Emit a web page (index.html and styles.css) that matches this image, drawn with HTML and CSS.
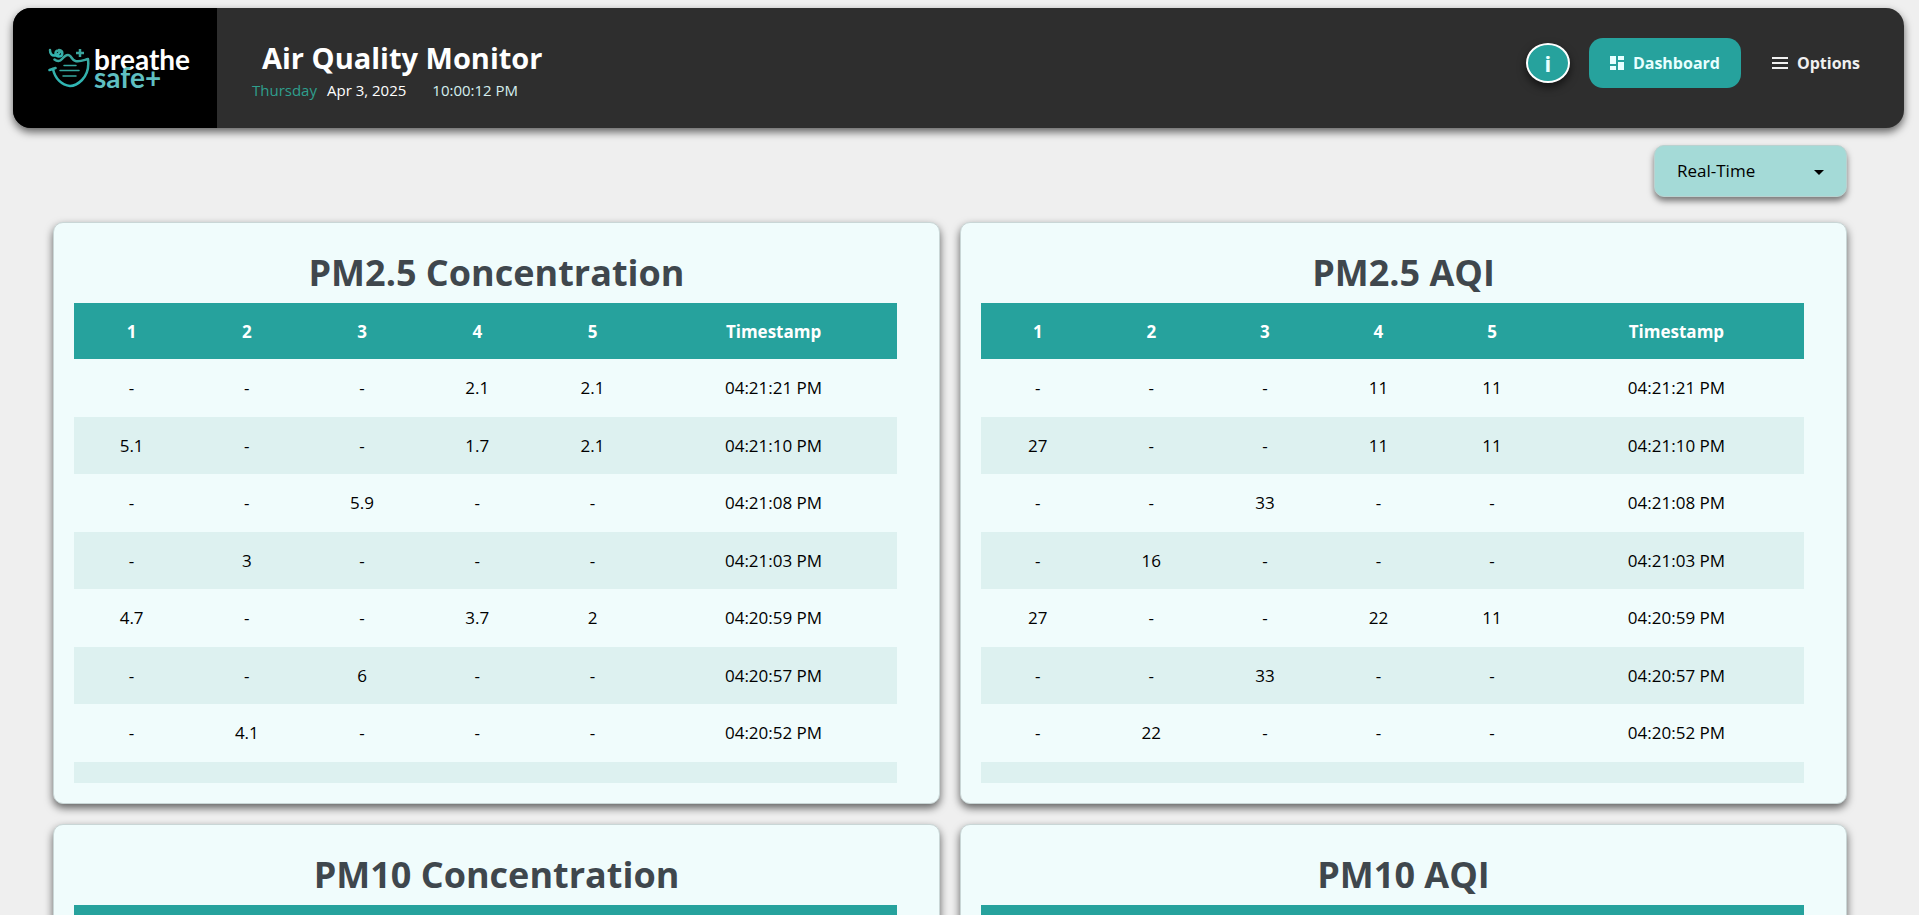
FILE: index.html
```
<!DOCTYPE html>
<html lang="en">
<head>
<meta charset="utf-8">
<title>Air Quality Monitor</title>
<link rel="stylesheet" href="styles.css">
</head>
<body>
<header class="topbar">
  <div class="logo">
    <svg class="logo-mark" viewBox="0 0 42 40" aria-hidden="true">
      <defs><linearGradient id="mask" x1="0" y1="0" x2="0" y2="1"><stop offset="0" stop-color="#3aa59c"/><stop offset="1" stop-color="#2fb7b5"/></linearGradient></defs>
      <g fill="none" stroke="url(#mask)" stroke-width="2.500" stroke-linecap="round" stroke-linejoin="round">
        <path d="M2 2C2 6 4 8 7 7.500C11 7 13 3 10.500 2.500C7 2 6 8.500 10.500 8.500C15.500 8.500 15.500 2.500 11 2"/>
        <path d="M6.500 11.500C9 13.500 12 13.500 14 11C17 7.500 19 6 21.500 7.500C24 9 24 12 27.500 13C32 14 36 12 40 11C41 19 39 27 34 32C30 36 26 38 22 38C14 37 7 31 5 21"/>
        <path d="M1.500 22L7.500 20"/>
      </g>
      <path fill="none" stroke="#3aa59c" stroke-width="2.500" d="M32 1V9M28 5H36"/>
      <path fill="none" stroke="#35a79f" stroke-width="1.500" stroke-linecap="round" d="M16 17.500H28M12 22.500H31M15 28H28"/>
    </svg>
    <div class="logo-text"><span class="logo-top">breathe</span><span class="logo-bottom">safe+</span></div>
  </div>
  <div class="heading">
    <h1>Air Quality Monitor</h1>
    <div class="clock"><span class="day">Thursday</span><span class="date">Apr 3, 2025</span><time class="time">10:00:12 PM</time></div>
  </div>
  <nav class="nav">
    <button class="info" type="button" aria-label="Information">i</button>
    <a class="nav-link active" href="#dashboard">
      <svg class="icon" viewBox="0 0 14 14" fill="currentColor" aria-hidden="true"><path d="M0 0H6V8H0ZM8 0H14V4H8ZM0 10H6V14H0ZM8 6H14V14H8Z"/></svg>
      Dashboard</a>
    <a class="nav-link" href="#options">
      <svg class="icon wide" viewBox="0 0 16 12" fill="currentColor" aria-hidden="true"><path d="M0 0H16V2H0ZM0 5H16V7H0ZM0 10H16V12H0Z"/></svg>
      Options</a>
  </nav>
</header>
<main class="content">
  <div class="toolbar">
    <label class="select-box">
      <select aria-label="Time range"><option>Real-Time</option><option>Hourly</option><option>Daily</option></select>
      <svg class="caret" viewBox="0 0 10 5" aria-hidden="true"><path d="M0 0H10L5 5Z"/></svg>
    </label>
  </div>
  <div class="grid">
    <section class="card">
      <h2>PM2.5 Concentration</h2>
      <div class="scroller">
        <table class="readings">
          <thead><tr><th>1</th><th>2</th><th>3</th><th>4</th><th>5</th><th class="stamp">Timestamp</th></tr></thead>
          <tbody>
            <tr><td>-</td><td>-</td><td>-</td><td>2.1</td><td>2.1</td><td>04:21:21 PM</td></tr>
            <tr><td>5.1</td><td>-</td><td>-</td><td>1.7</td><td>2.1</td><td>04:21:10 PM</td></tr>
            <tr><td>-</td><td>-</td><td>5.9</td><td>-</td><td>-</td><td>04:21:08 PM</td></tr>
            <tr><td>-</td><td>3</td><td>-</td><td>-</td><td>-</td><td>04:21:03 PM</td></tr>
            <tr><td>4.7</td><td>-</td><td>-</td><td>3.7</td><td>2</td><td>04:20:59 PM</td></tr>
            <tr><td>-</td><td>-</td><td>6</td><td>-</td><td>-</td><td>04:20:57 PM</td></tr>
            <tr><td>-</td><td>4.1</td><td>-</td><td>-</td><td>-</td><td>04:20:52 PM</td></tr>
            <tr><td></td><td></td><td></td><td></td><td></td><td></td></tr>
          </tbody>
        </table>
      </div>
    </section>
    <section class="card">
      <h2>PM2.5 AQI</h2>
      <div class="scroller">
        <table class="readings aqi">
          <thead><tr><th>1</th><th>2</th><th>3</th><th>4</th><th>5</th><th class="stamp">Timestamp</th></tr></thead>
          <tbody>
            <tr><td>-</td><td>-</td><td>-</td><td>11</td><td>11</td><td>04:21:21 PM</td></tr>
            <tr><td>27</td><td>-</td><td>-</td><td>11</td><td>11</td><td>04:21:10 PM</td></tr>
            <tr><td>-</td><td>-</td><td>33</td><td>-</td><td>-</td><td>04:21:08 PM</td></tr>
            <tr><td>-</td><td>16</td><td>-</td><td>-</td><td>-</td><td>04:21:03 PM</td></tr>
            <tr><td>27</td><td>-</td><td>-</td><td>22</td><td>11</td><td>04:20:59 PM</td></tr>
            <tr><td>-</td><td>-</td><td>33</td><td>-</td><td>-</td><td>04:20:57 PM</td></tr>
            <tr><td>-</td><td>22</td><td>-</td><td>-</td><td>-</td><td>04:20:52 PM</td></tr>
            <tr><td></td><td></td><td></td><td></td><td></td><td></td></tr>
          </tbody>
        </table>
      </div>
    </section>
    <section class="card">
      <h2>PM10 Concentration</h2>
      <div class="scroller"><table class="readings"><thead><tr><th></th></tr></thead></table></div>
    </section>
    <section class="card">
      <h2>PM10 AQI</h2>
      <div class="scroller"><table class="readings aqi"><thead><tr><th></th></tr></thead></table></div>
    </section>
  </div>
</main>
</body>
</html>
```
FILE: styles.css
```
:root {
  --teal: #26a29d;
  --dark: #2e2e2e;
  --shadow: 0 4px 8px rgba(0, 0, 0, 0.6);
}
* { box-sizing: border-box; }
html { scrollbar-width: none; }
body {
  margin: 0;
  padding: 8px 15px 20px 13px;
  background: #efefef;
  color: #000;
  font: 17px/24px "Segoe UI", "Open Sans", "Noto Sans", sans-serif;
}
.topbar {
  display: flex;
  height: 120px;
  overflow: hidden;
  border-radius: 18px;
  background: var(--dark);
  box-shadow: var(--shadow);
}
.logo {
  display: flex;
  align-items: center;
  width: 204px;
  padding-left: 35px;
  gap: 4px;
  background: #000;
}
.logo-mark { width: 42px; height: 40px; }
.logo-text {
  display: flex;
  flex-direction: column;
  font-family: Lato, "Open Sans", sans-serif;
  font-size: 28px;
  font-weight: 700;
  line-height: 18px;
}
.logo-top { color: #fff; }
.logo-bottom { color: #5fbfc1; }
.heading { padding: 32px 0 0 35px; }
.heading h1 {
  margin: 0;
  padding-left: 10px;
  color: #fff;
  font-size: 29px;
  font-weight: 700;
  line-height: 36px;
}
.clock { display: flex; font-size: 15px; line-height: 28px; color: #fff; }
.day { color: #2f9f8d; margin-right: 10px; }
.date { margin-right: 26px; }
.time { color: #d5eeee; }
.nav {
  display: flex;
  align-items: center;
  height: 110px;
  margin-left: auto;
  padding-right: 23px;
}
.info {
  width: 44px;
  height: 40px;
  margin-right: 19px;
  padding: 0;
  border: 2px solid #fff;
  border-radius: 50%;
  background: var(--teal);
  color: #e8ffff;
  font: 700 22px/32px "Segoe UI", "Open Sans", sans-serif;
  box-shadow: var(--shadow);
}
.nav-link {
  display: flex;
  align-items: center;
  height: 50px;
  padding: 0 21px;
  gap: 9px;
  border-radius: 14px;
  color: #f0f0f0;
  font-size: 16px;
  font-weight: 700;
  text-decoration: none;
}
.nav-link.active { margin-right: 10px; background: var(--teal); color: #e8ffff; }
.icon { width: 14px; height: 14px; }
.icon.wide { width: 16px; height: 12px; }
.content { padding: 17px 57px 0 40px; }
.toolbar { display: flex; justify-content: flex-end; margin-bottom: 25px; }
.select-box { position: relative; display: block; }
.select-box select {
  display: block;
  width: 193px;
  height: 52px;
  padding: 0 22px;
  border: 1px solid #b9d2d0;
  border-radius: 10px;
  appearance: none;
  background: #a4dad7;
  color: #000;
  font: inherit;
  box-shadow: 0 4px 6px rgba(0, 0, 0, 0.5);
}
.caret { position: absolute; top: 25px; right: 23px; width: 10px; height: 5px; pointer-events: none; }
.grid { display: grid; grid-template-columns: 1fr 1fr; gap: 20px; }
.card {
  min-width: 0;
  height: 582px;
  padding: 20px;
  border: 1px solid #c9d6d6;
  border-radius: 10px;
  background: #f0fcfc;
  box-shadow: var(--shadow);
}
.card h2 {
  margin: 0;
  color: #3f474d;
  font-size: 36px;
  font-weight: 700;
  line-height: 60px;
  text-align: center;
}
.scroller { height: 480px; padding-right: 22px; overflow: auto; scrollbar-width: none; }
.readings { width: 100%; border-collapse: collapse; table-layout: fixed; text-align: center; }
.readings th { height: 56px; padding: 1px 0 0; background: var(--teal); color: #fff; font-weight: 700; }
.readings td { height: 58px; padding: 0; }
.readings tr:nth-child(even) td { height: 57px; background: #ddf1f0; }
.readings .stamp { width: 30%; }
.aqi .stamp { width: 31%; }
```
